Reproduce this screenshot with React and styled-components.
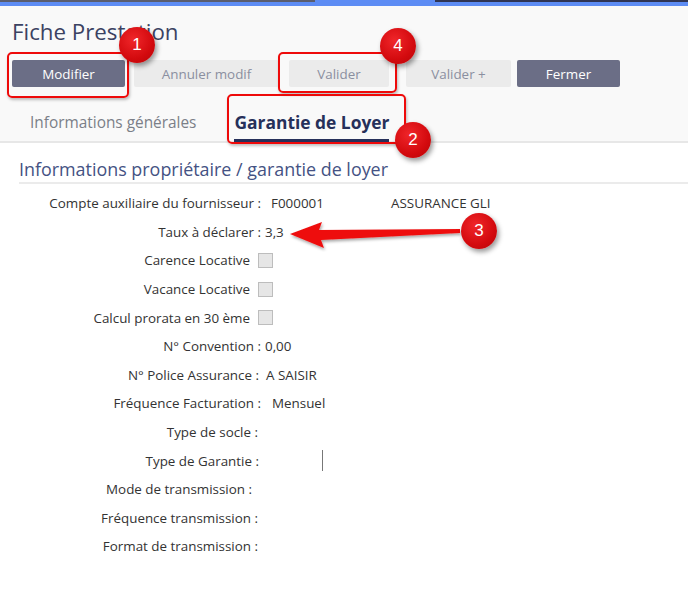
import React from 'react'
import styled, { createGlobalStyle } from 'styled-components'

const GlobalStyle = createGlobalStyle`
  body {
    margin: 0;
    background: #ffffff;
    font-family: "Open Sans", "Noto Sans", sans-serif;
  }
`

const Page = styled.div`
  position: relative;
  width: 688px;
  height: 616px;
  overflow: hidden;
  background: #ffffff;
`

const TopStrip = styled.div`
  height: 6px;
  background: #5d8cf4;
  display: flex;
  align-items: flex-start;
`
const StripDark = styled.div`
  height: 2px;
  width: ${({ w }) => w}px;
  background: ${({ navy }) => (navy ? '#2f3554' : '#5a5d6e')};
  margin-left: ${({ ml }) => ml || 0}px;
`

const Header = styled.div`
  background: #f9f9f9;
  border-bottom: 2px solid #e7e7e7;
  padding: 12px 0 0 12px;
`
const Title = styled.h1`
  margin: 0;
  font-size: 22.3px;
  line-height: 28px;
  font-weight: 400;
  color: #3b4262;
`
const Toolbar = styled.div`
  display: flex;
  align-items: center;
  margin-top: 14px;
  height: 27px;
`
const Button = styled.div`
  width: ${({ w }) => w}px;
  margin-right: ${({ gap }) => gap}px;
  height: 27px;
  display: flex;
  align-items: center;
  justify-content: center;
  font-size: 13.4px;
  border-radius: 2px;
  background: ${({ dark }) => (dark ? '#6b6e86' : '#ebebeb')};
  color: ${({ dark }) => (dark ? '#ffffff' : '#8a8fa0')};
`
const Tabs = styled.div`
  display: flex;
  margin-top: 18px;
  height: 36px;
  padding-left: 18px;
`
const Tab = styled.div`
  margin-left: ${({ ml }) => ml || 0}px;
  display: flex;
  align-items: center;
  font-size: ${({ active }) => (active ? 17.4 : 15.4)}px;
  font-weight: ${({ active }) => (active ? 700 : 400)};
  color: ${({ active }) => (active ? '#26305a' : '#7b7f88')};
  border-bottom: 3px solid ${({ active }) => (active ? '#26305a' : 'transparent')};
  margin-bottom: -1px;
`

const Section = styled.div`
  padding: 15px 0 0 19px;
`
const SectionTitle = styled.h2`
  margin: 0;
  font-size: 17.9px;
  line-height: 22px;
  font-weight: 400;
  color: #445283;
  border-bottom: 2px solid #ebebeb;
  padding-bottom: 2px;
`
const Form = styled.div`
  margin-top: 5px;
  display: flex;
  flex-direction: column;
`
const Row = styled.div`
  display: grid;
  grid-template-columns: 242px auto;
  align-items: center;
  height: 28.6px;
  font-size: 13.4px;
  color: #333333;
`
const Label = styled.div`
  text-align: right;
  white-space: nowrap;
  padding-right: ${({ pr }) => pr}px;
`
const Value = styled.div`
  display: flex;
  align-items: center;
  padding-left: ${({ pl }) => pl}px;
`
const ValueText = styled.span`
  min-width: ${({ w }) => w || 0}px;
`
const Check = styled.span`
  display: inline-block;
  width: 15px;
  height: 15px;
  box-sizing: border-box;
  background: #e6e6e6;
  border: 1px solid #bdbdbd;
  margin-left: -3px;
`
const Caret = styled.span`
  display: inline-block;
  width: 1px;
  height: 21px;
  background: #777;
  margin-left: 61px;
`

const Frame = styled.div`
  position: absolute;
  left: ${({ x }) => x}px;
  top: ${({ y }) => y}px;
  width: ${({ w }) => w}px;
  height: ${({ h }) => h}px;
  border: 2px solid #ee0a0a;
  border-radius: 5px;
  box-sizing: border-box;
  box-shadow: 1px 2px 3px rgba(0, 0, 0, 0.25);
`
const Badge = styled.div`
  position: absolute;
  left: ${({ x }) => x - 18}px;
  top: ${({ y }) => y - 18}px;
  width: 36px;
  height: 36px;
  border-radius: 50%;
  background: radial-gradient(circle at 40% 35%, #f0262a 0%, #d30a0e 60%, #b50508 100%);
  color: #ffffff;
  font-size: 17px;
  font-family: "Liberation Sans", Arial, sans-serif;
  display: flex;
  align-items: center;
  justify-content: center;
  box-shadow: 2px 3px 5px rgba(0, 0, 0, 0.4);
`
const ArrowSvg = styled.svg`
  position: absolute;
  left: 288px;
  top: 218px;
`

const rows = [
  { label: 'Compte auxiliaire du fournisseur :', value: 'F000001', extra: 'ASSURANCE GLI', pl: 10, w: 120 },
  { label: 'Taux à déclarer :', value: '3,3', pl: 4 },
  { label: 'Carence Locative', check: true, pr: 11 },
  { label: 'Vacance Locative', check: true, pr: 11 },
  { label: 'Calcul prorata en 30 ème', check: true, pr: 11 },
  { label: 'N° Convention :', value: '0,00', pl: 4 },
  { label: 'N° Police Assurance :', value: 'A SAISIR', pl: 5, pr: 2 },
  { label: 'Fréquence Facturation :', value: 'Mensuel', pl: 11 },
  { label: 'Type de socle :', pr: 3 },
  { label: 'Type de Garantie :', caret: true, pr: 2 },
  { label: 'Mode de transmission :', pr: 9 },
  { label: 'Fréquence transmission :', pr: 3 },
  { label: 'Format de transmission :', pr: 3 },
]

export default function App() {
  return (
    <Page>
      <GlobalStyle />
      <TopStrip>
        <StripDark w={315} />
        <StripDark w={253} ml={120} navy />
      </TopStrip>
      <Header>
        <Title>Fiche Prestation</Title>
        <Toolbar>
          <Button dark w={113} gap={9}>Modifier</Button>
          <Button w={145} gap={10}>Annuler modif</Button>
          <Button w={100} gap={17}>Valider</Button>
          <Button w={105} gap={6}>Valider +</Button>
          <Button dark w={103} gap={0}>Fermer</Button>
        </Toolbar>
        <Tabs>
          <Tab>Informations générales</Tab>
          <Tab active ml={38}>Garantie de Loyer</Tab>
        </Tabs>
      </Header>
      <Section>
        <SectionTitle>Informations propriétaire / garantie de loyer</SectionTitle>
        <Form>
          {rows.map((r) => (
            <Row key={r.label}>
              <Label pr={r.pr || 0}>{r.label}</Label>
              <Value pl={r.pl || 0}>
                {r.value && <ValueText w={r.w}>{r.value}</ValueText>}
                {r.extra && <ValueText>{r.extra}</ValueText>}
                {r.check && <Check />}
                {r.caret && <Caret />}
              </Value>
            </Row>
          ))}
        </Form>
      </Section>

      <Frame x={7} y={52} w={122} h={46} />
      <Badge x={137} y={45}>1</Badge>
      <Frame x={278} y={52} w={119} h={41} />
      <Badge x={398} y={46}>4</Badge>
      <Frame x={227} y={94} w={179} h={50} />
      <Badge x={413} y={140}>2</Badge>
      <ArrowSvg width="180" height="34" viewBox="0 0 180 34">
        <defs>
          <filter id="sh" x="-10%" y="-30%" width="130%" height="180%">
            <feDropShadow dx="1" dy="2" stdDeviation="1.5" floodOpacity="0.35" />
          </filter>
        </defs>
        <path
          d="M2 16 L34 4 L31 12 L172 11 L172 15 L33 22 L36 30 Z"
          fill="#ee1010"
          filter="url(#sh)"
        />
      </ArrowSvg>
      <Badge x={479} y={231}>3</Badge>
    </Page>
  )
}
